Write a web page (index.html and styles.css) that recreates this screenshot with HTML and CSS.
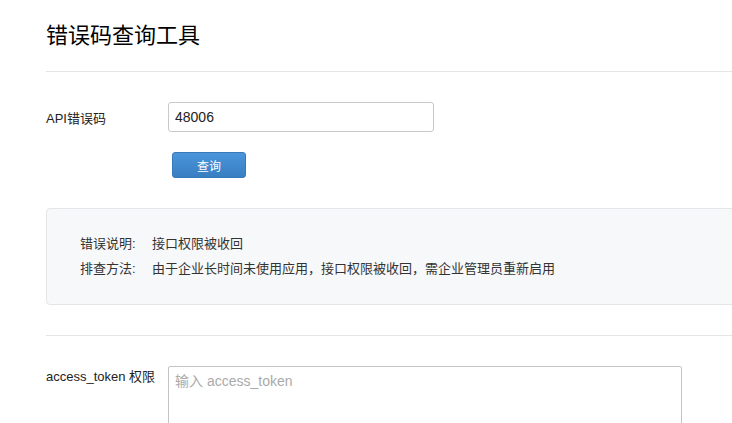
FILE: index.html
```html
<!DOCTYPE html>
<html lang="zh-CN">
<head>
  <meta charset="UTF-8">
  <meta name="viewport" content="width=device-width, initial-scale=1.0">
  <title>错误码查询工具</title>
  <link rel="stylesheet" href="styles.css">
</head>
<body>

  <div class="page">
    <h1 class="page-title">错误码查询工具</h1>

    <form class="query-form">
      <div class="form-row">
        <label class="form-label" for="errcode">API错误码</label>
        <input class="form-input" type="text" id="errcode" name="errcode" value="48006">
      </div>
      <div class="form-actions">
        <button type="button" class="btn-primary">查询</button>
      </div>
    </form>

    <div class="result-box">
      <div class="result-row">
        <span class="result-label">错误说明:</span>
        <span class="result-value">接口权限被收回</span>
      </div>
      <div class="result-row">
        <span class="result-label">排查方法:</span>
        <span class="result-value">由于企业长时间未使用应用，接口权限被收回，需企业管理员重新启用</span>
      </div>
    </div>

    <div class="section">
      <div class="form-row form-row-top">
        <label class="form-label" for="token">access_token 权限</label>
        <textarea class="form-textarea" id="token" name="token" placeholder="输入 access_token"></textarea>
      </div>
    </div>
  </div>

</body>
</html>
```

FILE: styles.css
```css
html, body {
  margin: 0;
  overflow: hidden;
}

body {
  font-family: "Liberation Sans", Arial, "Noto Sans CJK SC", sans-serif;
  color: #222;
  background: #fff;
}

.page {
  width: 720px;
  padding-left: 46px;
}

.page-title {
  margin: 21px 0 0;
  padding-bottom: 20px;
  font-size: 22px;
  line-height: 30px;
  font-weight: normal;
  color: #000;
  border-bottom: 1px solid #e5e5e5;
}

.query-form {
  padding-top: 30px;
}

.form-row {
  display: flex;
  align-items: center;
}

.form-row-top {
  align-items: flex-start;
}

.form-label {
  width: 122px;
  font-size: 13px;
  color: #222;
}

.form-row-top .form-label {
  padding-top: 2px;
  line-height: 18px;
}

.form-input {
  box-sizing: border-box;
  width: 266px;
  height: 30px;
  padding: 0 6px;
  font-family: inherit;
  font-size: 14px;
  color: #222;
  border: 1px solid #c9c9c9;
  border-radius: 3px;
  outline: none;
}

.form-actions {
  padding: 20px 0 0 126px;
}

.btn-primary {
  width: 74px;
  height: 26px;
  padding: 0;
  font-family: inherit;
  font-size: 12px;
  color: #fff;
  background: linear-gradient(to bottom, #4b95da, #387ec2);
  border: 1px solid #3778b8;
  border-radius: 3px;
  cursor: pointer;
}

.result-box {
  margin-top: 30px;
  padding: 22px 0 23px 33px;
  background: #f7f8fa;
  border: 1px solid #e3e5e8;
  border-radius: 4px;
  font-size: 13px;
  color: #333;
}

.result-row {
  display: flex;
  line-height: 25px;
}

.result-label {
  width: 72px;
}

.section {
  margin-top: 30px;
  padding-top: 30px;
  border-top: 1px solid #e5e5e5;
}

.form-textarea {
  box-sizing: border-box;
  width: 514px;
  height: 90px;
  padding: 3px 6px;
  font-family: inherit;
  font-size: 14px;
  border: 1px solid #c4c4c4;
  border-radius: 2px;
  resize: none;
  outline: none;
}

.form-textarea::placeholder {
  color: #aaa;
}
```
